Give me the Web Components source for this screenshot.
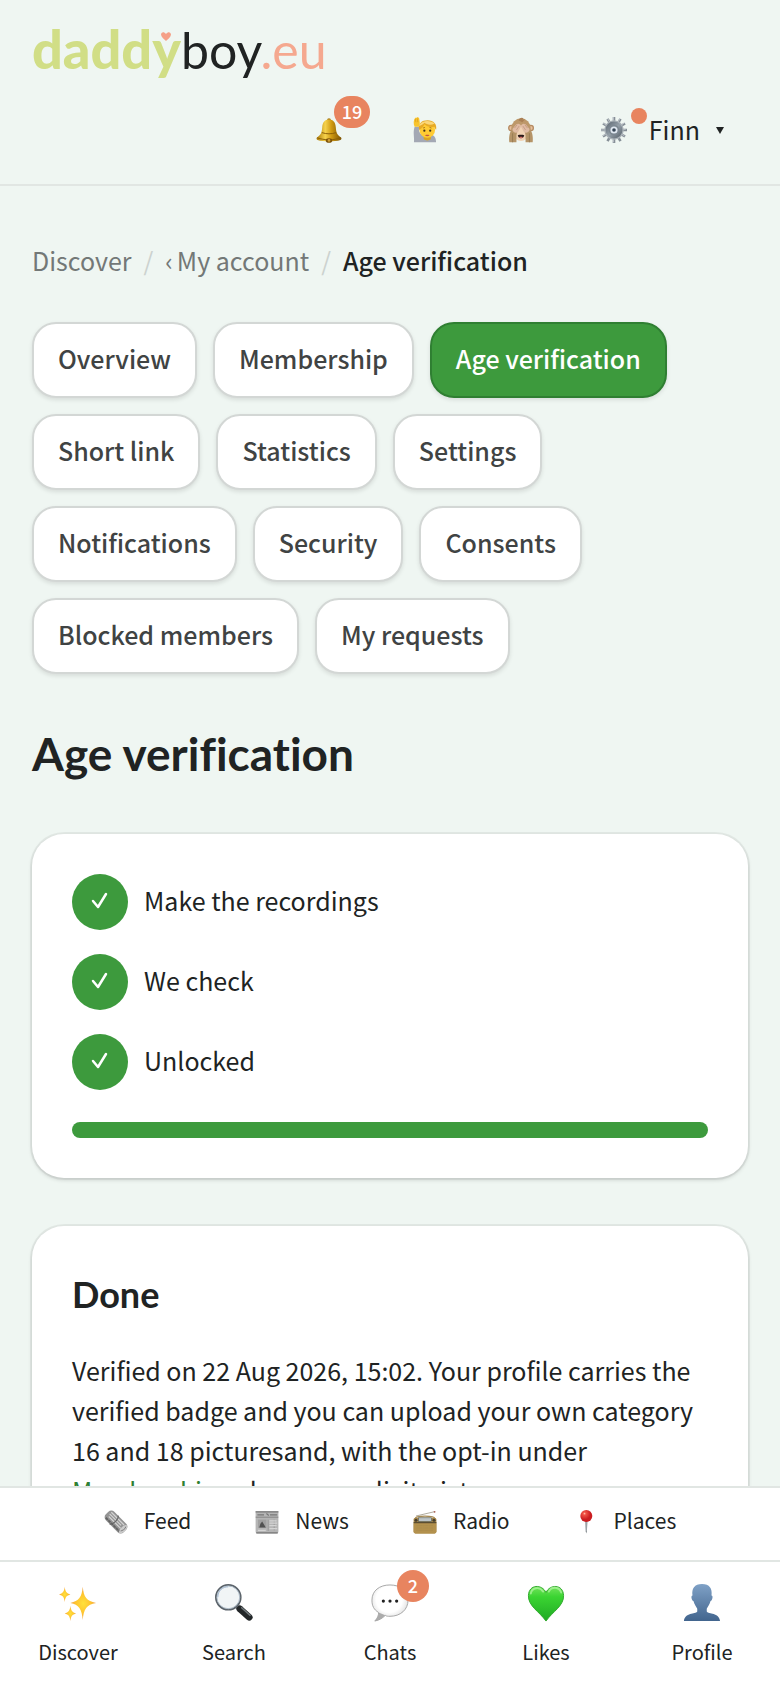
<!DOCTYPE html>
<html lang="en">
<head>
<meta charset="utf-8" />
<meta name="viewport" content="width=device-width, initial-scale=1" />
<title>Age verification</title>
<style>
:root {
  --background: #eff6f2;
  --card: #ffffff;
  --foreground: #202323;
  --muted: #737877;
  --line: #e1e6e3;
  --primary: #3d9a3d;
  --primary-dark: #2f7f32;
  --accent: #e8845f;
  --font-head: Lato, sans-serif;
}
html,
body {
  height: 100%;
}
body {
  margin: 0;
  background: var(--background);
  color: var(--foreground);
  font-family: "Noto Sans CJK SC", "Noto Sans", sans-serif;
  font-size: 25px;
  line-height: 40px;
}
</style>
</head>
<body>
<app-shell>
  <site-header slot="header"></site-header>
  <bread-crumb></bread-crumb>
  <tab-list>
    <tab-link>Overview</tab-link>
    <tab-link>Membership</tab-link>
    <tab-link active>Age verification</tab-link>
    <tab-link>Short link</tab-link>
    <tab-link>Statistics</tab-link>
    <tab-link>Settings</tab-link>
    <tab-link>Notifications</tab-link>
    <tab-link>Security</tab-link>
    <tab-link>Consents</tab-link>
    <tab-link>Blocked members</tab-link>
    <tab-link>My requests</tab-link>
  </tab-list>
  <page-title>Age verification</page-title>
  <info-card>
    <check-step>Make the recordings</check-step>
    <check-step>We check</check-step>
    <check-step>Unlocked</check-step>
    <step-progress></step-progress>
  </info-card>
  <info-card heading="Done">
    <card-text>Verified on 22 Aug 2026, 15:02. Your profile carries the verified badge and you can upload your own category 16 and 18 picturesand, with the opt-in under <text-link>Membership</text-link> , also see explicit pictures.</card-text>
  </info-card>
  <sub-nav slot="footer">
    <sub-item icon="roll">Feed</sub-item>
    <sub-item icon="paper">News</sub-item>
    <sub-item icon="radio">Radio</sub-item>
    <sub-item icon="pin">Places</sub-item>
  </sub-nav>
  <bottom-nav slot="footer">
    <nav-item icon="sparkles">Discover</nav-item>
    <nav-item icon="search">Search</nav-item>
    <nav-item icon="chat" badge="2">Chats</nav-item>
    <nav-item icon="heart">Likes</nav-item>
    <nav-item icon="person">Profile</nav-item>
  </bottom-nav>
</app-shell>

<script>
const icons = {
  bell: `
    <defs><linearGradient id="g"><stop stop-color="#a97806"/><stop offset=".35" stop-color="#f6d24c"/><stop offset=".6" stop-color="#cf9a12"/><stop offset="1" stop-color="#7b5203"/></linearGradient></defs>
    <circle cx="20" cy="5" r="3" fill="#a97d18"/>
    <path d="M20 4c7 0 10 5 10.500 12 .5 8 2 11 8 15.500 1 1 1 3-1 4-9 3-26 3-35 0-2-1-2-3-1-4C7.500 27 9 24 9.500 16 10 9 13 4 20 4z" fill="url(#g)"/>
    <path d="M9 24c7 2.500 15 2.500 22 0M2 32c10 4 26 4 36 0" fill="none" stroke="#8a5f08" stroke-width="1.500"/>
    <ellipse cx="20" cy="36" rx="5" ry="3.500" fill="#7d5309"/><circle cx="20" cy="36" r="2" fill="#d2a136"/>`,
  hand: `
    <path d="M3 39c1-8-2-15 1-24l7 0c-1 6 0 10 4 12l14 0c6 1 8 6 8 12z" fill="#a3a8b4"/>
    <path d="M4 15C2 10 2 5 5 1l2 0 2-1 2 2 1 7c0 3-1 5-1 6z" fill="#f8c42c"/>
    <path d="M5 3l1 5M8 2l1 6" stroke="#d9951c" fill="none"/>
    <path d="M18 27h11v7c-3 3-8 3-11 0z" fill="#dba41f"/>
    <ellipse cx="23.500" cy="20" rx="12" ry="12" fill="#ffcb33"/>
    <path d="M11 20C9 10 15 5 24 5s15 6 13 15l-3-5c-7 1-12-1-15-4-1 4-4 6-8 9z" fill="#e7aa25"/>
    <path d="M12 11c6-7 17-6 23-1-6 3-12 2-16-1-2 3-5 4-8 5z" fill="#fbd779"/>
    <circle cx="19" cy="21" r="1.700" fill="#3f301e"/><circle cx="28" cy="21" r="1.700" fill="#3f301e"/>
    <path d="M17 17l3-1M27 16l3 1" stroke="#805515"/><path d="M20 28c2-1 5-1 7 0-2 2-5 2-7 0z" fill="#c2563d"/>`,
  monkey: `
    <circle cx="5" cy="17" r="5" fill="#b58a61"/><circle cx="35" cy="17" r="5" fill="#b58a61"/>
    <circle cx="5" cy="17" r="3" fill="#e7bf9c"/><circle cx="35" cy="17" r="3" fill="#e7bf9c"/>
    <ellipse cx="20" cy="18" rx="15" ry="16" fill="#bd986a"/>
    <path d="M16 5c1-4 6-5 8-3l-2 2 4 0-4 4z" fill="#aa8055"/>
    <ellipse cx="20" cy="25" rx="11" ry="12" fill="#f1d2b4"/>
    <path d="M2 39C1 29 3 21 8 16l7 3-2 9 0 11zM38 39c1-10-1-18-6-23l-7 3 2 9 0 11z" fill="#b59468"/>
    <path d="M7 18l6-7c3-2 7 0 7 4l-5 9c-5 1-9-2-8-6zM33 18l-6-7c-3-2-7 0-7 4l5 9c5 1 9-2 8-6z" fill="#e0bba3"/>
    <path d="M10 17l4-5M13 20l4-6M30 17l-4-5M27 20l-4-6" stroke="#b88d76"/>
    <path d="M15 28c3-1 7-1 10 0-1 6-9 6-10 0z" fill="#2b1b19"/><path d="M17 31c2-1 4-1 6 0-2 2-4 2-6 0z" fill="#d36b67"/>
    <path d="M7 25l0 14M33 25l0 14" stroke="#8d7148"/>`,
  gear: `
    <defs><linearGradient id="g" x2="1" y2="1"><stop stop-color="#59646e"/><stop offset=".5" stop-color="#949fa8"/><stop offset="1" stop-color="#525c65"/></linearGradient></defs>
    <g stroke="#868f97" stroke-width="4"><path d="M20 0v40M0 20h40M3 10l34 20M37 10L3 30M10 3l20 34M30 3L10 37"/></g>
    <g stroke="#dce0e4" stroke-width="1"><path d="M19 0v10M0 20h10M3 9l8 5M36 9l-7 5M10 2l5 9M29 2l-4 9M19 30v9M38 19h-8M36 29l-8-5M3 29l8-5"/></g>
    <circle cx="20" cy="20" r="15" fill="#abb3b9"/><circle cx="20" cy="20" r="13" fill="url(#g)"/>
    <circle cx="20" cy="20" r="8" fill="#7c8791"/><circle cx="20" cy="20" r="5.500" fill="#dfe7f0"/><circle cx="20" cy="20" r="2.800" fill="#344454"/>`,
  roll: `
    <g transform="rotate(45 20 20)">
      <rect x="-1" y="10" width="42" height="20" rx="7" fill="#949494"/>
      <path d="M3 14h30M3 18h27M5 22h28" stroke="#d4d4d4" stroke-width="2"/>
      <path d="M3 27h32" stroke="#626262" stroke-width="3" stroke-dasharray="5 1"/>
      <path d="M15 10c5 3 5 16 0 20" fill="none" stroke="#656565" stroke-width="2"/>
      <ellipse cx="37" cy="20" rx="4" ry="9" fill="#ccc"/><path d="M37 14c3 3 0 10-1 11" fill="none" stroke="#777" stroke-width="1.500"/>
    </g>`,
  paper: `
    <path d="M1 2h38v34c0 2-1 3-3 3H4c-2 0-3-1-3-3z" fill="#b5b5b5"/>
    <path d="M1 3h38M2 38h36" stroke="#777" stroke-width="2"/>
    <path d="M4 8h11M19 6l4 3M25 8h12" stroke="#777" stroke-width="2"/>
    <path d="M1 12h38" stroke="#676767"/>
    <rect x="5" y="16" width="14" height="14" fill="#a0a0a0"/><path d="M7 29l2-6 3-4 3 5 3 5z" fill="#515151"/>
    <path d="M22 16v19M32 16v18" stroke="#8b8b8b"/><path d="M24 18h12M24 22h13M24 26h12M5 34h13M24 31h13" stroke="#d4d4d4" stroke-width="2"/>`,
  radio: `
    <path d="M5 10L35 3" stroke="#a6a092" stroke-width="1.500"/><circle cx="36" cy="3" r="1.500" fill="#a2594c"/>
    <path d="M4 14c0-5 32-5 32 0" fill="none" stroke="#a58a54" stroke-width="2"/>
    <rect x="1" y="13" width="38" height="26" rx="3" fill="#a58548"/>
    <path d="M1 22h38v14c0 2-1 3-3 3H4c-2 0-3-1-3-3z" fill="#b3914d"/>
    <rect x="9" y="13" width="22" height="6" fill="#bdc5c8" stroke="#555b52" stroke-width="1"/>
    <path d="M1 21h38" stroke="#5b4e32" stroke-width="2"/><circle cx="5" cy="17" r="2.500" fill="#453e2d"/><circle cx="35" cy="17" r="2.500" fill="#453e2d"/>
    <path d="M6 26h28M6 30h28M6 34h28" stroke="#a08449" stroke-dasharray="1 1"/>`,
  pin: `
    <defs><radialGradient id="g" cx=".35" cy=".3"><stop stop-color="#ffc0aa"/><stop offset=".25" stop-color="#f05144"/><stop offset="1" stop-color="#ca1d20"/></radialGradient></defs>
    <path d="M18.500 17h4l-1 19-1 3-1-3z" fill="#858c90"/><path d="M20 20v15" stroke="#d0d4d6"/>
    <circle cx="20.500" cy="10" r="10" fill="url(#g)"/>`,
  sparkles: `
    <defs><radialGradient id="g"><stop stop-color="#ffe13b"/><stop offset=".6" stop-color="#ffc32f"/><stop offset="1" stop-color="#efa04c"/></radialGradient></defs>
    <g fill="url(#g)"><path d="M25 3c1 11 4 15 14 17-10 2-13 6-14 18-1-12-4-16-13-18 9-2 12-6 13-17z"/>
    <path d="M6 3c.5 5 2 7 6 8-4 1-5.500 3-6 8C5.500 14 4 12 0 11c4-1 5.500-3 6-8z"/>
    <path d="M12 23c.5 5 2 7 6 8-4 1-5.500 3-6 8-.5-5-2-7-6-8 4-1 5.500-3 6-8z"/></g>`,
  search: `
    <path d="M25 26l-3-3" stroke="#72777b" stroke-width="3"/>
    <path d="M26 26l10 9" stroke="#222628" stroke-width="7" stroke-linecap="round"/><path d="M28 25l9 8" stroke="#71787b" stroke-width="1.500" stroke-linecap="round"/>
    <circle cx="14" cy="14" r="13" fill="#f1f5f6" stroke="#5b636a" stroke-width="2"/>
    <circle cx="14" cy="14" r="12" fill="none" stroke="#afbdc9"/><path d="M3 14C3 7 8 3 14 3" fill="none" stroke="#a5bad3" stroke-width="1"/>`,
  chat: `
    <defs><radialGradient id="g" cx=".48" cy=".4" r=".6"><stop offset=".6" stop-color="#fff"/><stop offset=".88" stop-color="#e4e4e4"/><stop offset="1" stop-color="#a2a2a2"/></radialGradient></defs>
    <path d="M20 1c11 0 19 6 19 16S31 34 20 34c-2 0-4 0-5-1-3 3-6 5-11 6 3-3 4-6 4-9C3 27 1 23 1 17 1 7 9 1 20 1z" fill="url(#g)" stroke="#a4a4a4" stroke-width="1"/>
    <path d="M4 39c3-3 4-6 4-9l7 3c-3 3-6 5-11 6z" fill="#ababab"/>
    <circle cx="13" cy="18" r="1.700" fill="#222"/><circle cx="20" cy="18" r="1.700" fill="#222"/><circle cx="27" cy="18" r="1.700" fill="#222"/>`,
  heart: `
    <defs><linearGradient id="g" x2="0" y2="1"><stop stop-color="#71e35a"/><stop offset=".3" stop-color="#3bd432"/><stop offset="1" stop-color="#1faa24"/></linearGradient></defs>
    <path d="M20 9C24 0 38 0 38.500 12 39 23 27 29 20 39 13 29 1 23 1.500 12 2 0 16 0 20 9z" fill="url(#g)" stroke="#2fa82b" stroke-width="1"/>
    <path d="M4 10c1-6 9-8 13-2M23 8c3-6 11-5 13 1" fill="none" stroke="#b5f6a5" stroke-width="2" stroke-linecap="round" opacity=".7"/>`,
  person: `
    <defs><linearGradient id="g" x2="0" y2="1"><stop stop-color="#7fa1c6"/><stop offset="1" stop-color="#42658e"/></linearGradient></defs>
    <path d="M20 0c8 0 11 5 10 12 2 0 1 5-1 6-1 4-3 6-4 8v3c2 3 13 1 14 10H1c1-9 12-7 14-10v-3c-1-2-3-4-4-8-2-1-3-6-1-6C9 5 12 0 20 0z" fill="url(#g)"/>`,
};

class Element extends HTMLElement {
  constructor() {
    super();
    this.attachShadow({ mode: "open" });
  }

  connectedCallback() {
    const template = document.createElement("template");
    template.innerHTML = this.render();
    this.shadowRoot.replaceChildren(template.content.cloneNode(true));
  }
}

class EmojiIcon extends Element {
  render() {
    return `
<style>
:host {
  display: block;
  width: var(--icon-size, 26px);
  height: var(--icon-size, 26px);
}
svg {
  display: block;
  width: 100%;
  height: 100%;
}
</style>
<svg viewBox="0 0 40 40" aria-hidden="true">${icons[this.getAttribute("name")]}</svg>`;
  }
}

class CountBadge extends Element {
  render() {
    return `
<style>
:host {
  display: block;
  box-sizing: border-box;
  min-width: 32px;
  height: 32px;
  padding: 0 8px;
  border-radius: 16px;
  background: var(--accent);
  color: #fff;
  font-size: 18px;
  font-weight: 500;
  line-height: 30px;
  text-align: center;
}
</style>
<slot></slot>`;
  }
}

class AppShell extends Element {
  render() {
    return `
<style>
:host {
  display: flex;
  flex-direction: column;
  height: 100%;
}
main {
  flex: 1;
  min-height: 0;
  overflow-y: auto;
  scrollbar-width: none;
}
.content {
  display: flow-root;
  padding: 54px 32px;
}
footer {
  background: var(--card);
}
</style>
<main>
  <slot name="header"></slot>
  <div class="content"><slot></slot></div>
</main>
<footer><slot name="footer"></slot></footer>`;
  }
}

class SiteHeader extends Element {
  render() {
    return `
<style>
:host {
  display: block;
  border-bottom: 2px solid var(--line);
}
header {
  display: flex;
  flex-direction: column;
  padding: 18px 32px 22px;
}
.logo {
  align-self: flex-start;
  color: inherit;
  font-family: var(--font-head);
  font-size: 50px;
  line-height: 64px;
  text-decoration: none;
}
.logo b {
  position: relative;
  color: #d1de86;
  font-size: 54px;
  font-weight: 900;
  line-height: 1;
}
.logo span {
  color: #f5a88f;
}
.logo svg {
  position: absolute;
  right: 10px;
  top: 16px;
  width: 10px;
  height: 9px;
}
.actions {
  display: flex;
  justify-content: flex-end;
  gap: 16px;
  padding-top: 16px;
}
button {
  position: relative;
  display: flex;
  align-items: center;
  justify-content: center;
  width: 80px;
  height: 64px;
  padding: 0;
  border: 0;
  background: none;
  color: inherit;
  font: inherit;
}
count-badge {
  position: absolute;
  left: 45px;
  top: -2px;
}
button.user {
  width: auto;
  gap: 22px;
  padding: 0 24px;
}
.name {
  padding-bottom: 3px;
}
.dot {
  position: absolute;
  left: 54px;
  top: 10px;
  width: 16px;
  height: 16px;
  border-radius: 50%;
  background: var(--accent);
}
.caret {
  margin-left: -6px;
  border: 4px solid transparent;
  border-top: 7px solid var(--foreground);
  border-bottom: 0;
}
</style>
<header>
  <a class="logo" href="#"><b>daddy<svg viewBox="0 0 10 9"><path d="M5 9C3 7 0 5 0 2.500 0 0 3-1 5 2c2-3 5-2 5 .5C10 5 7 7 5 9z" fill="#f5a088"/></svg></b>boy<span>.eu</span></a>
  <div class="actions">
    <button aria-label="Notifications"><emoji-icon name="bell"></emoji-icon><count-badge>19</count-badge></button>
    <button aria-label="Status"><emoji-icon name="hand"></emoji-icon></button>
    <button aria-label="Hide pictures"><emoji-icon name="monkey"></emoji-icon></button>
    <button class="user"><emoji-icon name="gear"></emoji-icon><i class="dot"></i><span class="name">Finn</span><i class="caret"></i></button>
  </div>
</header>`;
  }
}

class BreadCrumb extends Element {
  render() {
    return `
<style>
:host {
  display: block;
}
nav {
  display: flex;
  flex-wrap: wrap;
  gap: 12px;
}
a {
  display: flex;
  gap: 4px;
  color: var(--muted);
  text-decoration: none;
}
i {
  color: #ccd2cf;
  font-style: normal;
}
strong {
  font-weight: 500;
}
</style>
<nav aria-label="Breadcrumb">
  <a href="#">Discover</a><i>/</i><a href="#"><span>‹</span><span>My account</span></a><i>/</i><strong>Age verification</strong>
</nav>`;
  }
}

class TabList extends Element {
  render() {
    return `
<style>
:host {
  display: block;
  margin-top: 42px;
}
nav {
  display: flex;
  flex-wrap: wrap;
  gap: 16px;
}
</style>
<nav><slot></slot></nav>`;
  }
}

class TabLink extends Element {
  render() {
    return `
<style>
:host {
  display: block;
}
a {
  display: block;
  padding: 14px 24px 18px;
  border: 2px solid #d3d7d5;
  border-radius: 24px;
  background: var(--card);
  box-shadow: 0 2px 4px rgb(0 0 0 / 0.1);
  color: #404343;
  font-weight: 500;
  text-decoration: none;
}
:host([active]) a {
  border-color: var(--primary-dark);
  background: var(--primary);
  color: #fff;
}
</style>
<a href="#"><slot></slot></a>`;
  }
}

class PageTitle extends Element {
  render() {
    return `
<style>
:host {
  display: block;
  margin: 48px 0;
}
h1 {
  margin: 0;
  font-family: var(--font-head);
  font-size: 46px;
  font-variant-ligatures: none;
  line-height: 64px;
}
</style>
<h1><slot></slot></h1>`;
  }
}

class InfoCard extends Element {
  render() {
    const heading = this.getAttribute("heading");
    return `
<style>
:host {
  display: block;
  margin-bottom: 48px;
}
section {
  display: grid;
  gap: 24px;
  padding: 40px;
  border-radius: 32px;
  background: var(--card);
  box-shadow: 0 0 0 2px rgb(0 0 0 / 0.05), 0 2px 4px rgb(0 0 0 / 0.15);
}
h2 {
  margin: 0 0 4px;
  font-family: var(--font-head);
  font-size: 36px;
  line-height: 56px;
}
</style>
<section>${heading ? `<h2>${heading}</h2>` : ""}<slot></slot></section>`;
  }
}

class CheckStep extends Element {
  render() {
    return `
<style>
:host {
  display: flex;
  align-items: center;
  gap: 16px;
}
.mark {
  display: grid;
  place-items: center;
  width: 56px;
  height: 56px;
  border-radius: 50%;
  background: var(--primary);
}
.label {
  padding-bottom: 4px;
}
svg {
  width: 20px;
  height: 20px;
}
</style>
<span class="mark"><svg viewBox="0 0 20 20"><path d="M3 9l5 6 8-13" fill="none" stroke="#fff" stroke-width="2.500" stroke-linecap="round" stroke-linejoin="round"/></svg></span>
<span class="label"><slot></slot></span>`;
  }
}

class StepProgress extends Element {
  render() {
    return `
<style>
:host {
  display: block;
  padding-top: 8px;
}
progress {
  display: block;
  width: 100%;
  height: 16px;
  border: 0;
  border-radius: 8px;
  overflow: hidden;
  appearance: none;
}
progress::-webkit-progress-bar {
  background: #e4ebe6;
}
progress::-webkit-progress-value {
  background: var(--primary);
}
progress::-moz-progress-bar {
  background: var(--primary);
}
</style>
<progress aria-label="Verification" value="3" max="3"></progress>`;
  }
}

class CardText extends Element {
  render() {
    return `
<style>
:host {
  display: block;
}
p {
  margin: 0;
}
</style>
<p><slot></slot></p>`;
  }
}

class TextLink extends Element {
  render() {
    return `
<style>
:host {
  display: inline;
}
a {
  color: var(--primary-dark);
  text-underline-offset: 4px;
}
</style>
<a href="#"><slot></slot></a>`;
  }
}

class SubNav extends Element {
  render() {
    return `
<style>
:host {
  display: block;
  border-top: 2px solid var(--line);
}
nav {
  display: flex;
  justify-content: center;
  gap: 64px;
  padding: 14px 16px 18px;
}
</style>
<nav aria-label="More"><slot></slot></nav>`;
  }
}

class SubItem extends Element {
  render() {
    return `
<style>
:host {
  display: block;
  --icon-size: 24px;
}
a {
  display: flex;
  align-items: center;
  gap: 16px;
  color: inherit;
  font-size: 21px;
  text-decoration: none;
}
.label {
  line-height: 36px;
  padding-bottom: 4px;
}
</style>
<a href="#"><emoji-icon name="${this.getAttribute("icon")}"></emoji-icon><span class="label"><slot></slot></span></a>`;
  }
}

class BottomNav extends Element {
  render() {
    return `
<style>
:host {
  display: block;
  border-top: 2px solid var(--line);
}
nav {
  display: grid;
  grid-template-columns: repeat(5, 1fr);
  padding: 22px 0 20px;
}
</style>
<nav aria-label="Main"><slot></slot></nav>`;
  }
}

class NavItem extends Element {
  render() {
    const badge = this.getAttribute("badge");
    return `
<style>
:host {
  display: block;
  --icon-size: 38px;
}
a {
  display: flex;
  flex-direction: column;
  align-items: center;
  gap: 14px;
  color: inherit;
  font-size: 20px;
  line-height: 32px;
  text-decoration: none;
}
.icon {
  position: relative;
}
count-badge {
  position: absolute;
  left: 26px;
  top: -14px;
}
</style>
<a href="#">
  <span class="icon"><emoji-icon name="${this.getAttribute("icon")}"></emoji-icon>${badge ? `<count-badge>${badge}</count-badge>` : ""}</span>
  <slot></slot>
</a>`;
  }
}

customElements.define("emoji-icon", EmojiIcon);
customElements.define("count-badge", CountBadge);
customElements.define("app-shell", AppShell);
customElements.define("site-header", SiteHeader);
customElements.define("bread-crumb", BreadCrumb);
customElements.define("tab-list", TabList);
customElements.define("tab-link", TabLink);
customElements.define("page-title", PageTitle);
customElements.define("info-card", InfoCard);
customElements.define("check-step", CheckStep);
customElements.define("step-progress", StepProgress);
customElements.define("card-text", CardText);
customElements.define("text-link", TextLink);
customElements.define("sub-nav", SubNav);
customElements.define("sub-item", SubItem);
customElements.define("bottom-nav", BottomNav);
customElements.define("nav-item", NavItem);
</script>
</body>
</html>
